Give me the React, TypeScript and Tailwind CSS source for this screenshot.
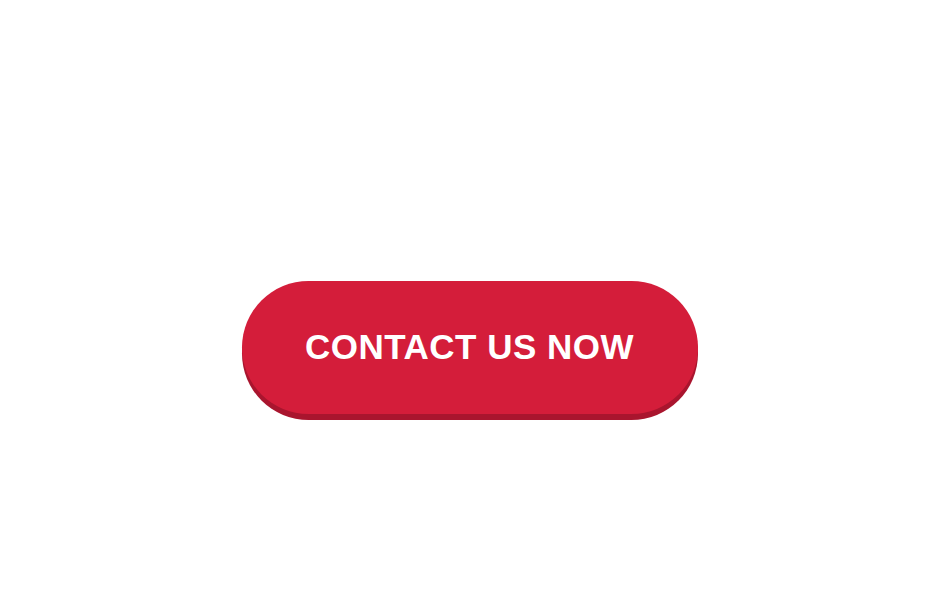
import React from "react";

export default function App() {
  return (
    <div className="w-[939px] h-[598px] bg-white flex justify-center pt-[281px]">
      <button
        className="w-[456px] h-[133px] rounded-full bg-[#d41d3a] shadow-[0_6px_0_#a9152e] text-white font-bold text-[35px] leading-none tracking-[0.5px] pb-[3px] flex items-center justify-center"
        style={{ fontFamily: '"Liberation Sans", Arial, sans-serif' }}
      >
        CONTACT US NOW
      </button>
    </div>
  );
}
